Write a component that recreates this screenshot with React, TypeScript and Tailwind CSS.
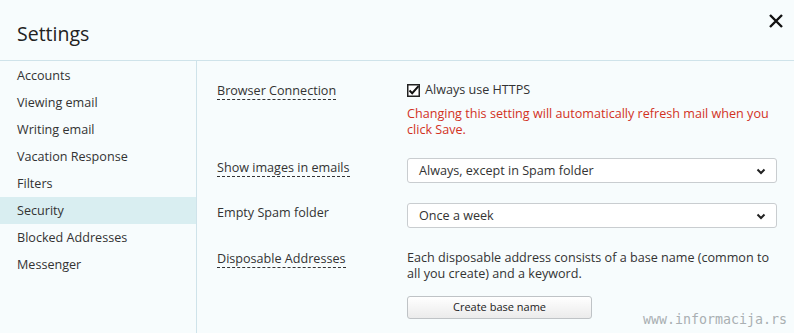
import React from 'react';

const menu = ['Accounts', 'Viewing email', 'Writing email', 'Vacation Response', 'Filters', 'Security', 'Blocked Addresses', 'Messenger'];

const Chevron = () => (
	<svg width="10" height="7" viewBox="0 0 10 7" className="absolute right-[10px] top-[9px]">
		<path d="M1.5 1.5 L5 5 L8.5 1.5" fill="none" stroke="#222" strokeWidth="2" />
	</svg>
);

const Select = ({value}: {value: string}) => (
	<div className="relative w-[370px] h-[25px] border border-[#c9cdd0] rounded-[3px] bg-white pl-[11px] leading-[23px]">
		{value}
		<Chevron />
	</div>
);

const Label = ({text, dashed}: {text: string, dashed?: boolean}) => (
	<div className="w-[190px] shrink-0">
		<span className={dashed ? 'border-b border-dashed border-[#333] leading-[16px] inline-block' : 'leading-[16px] inline-block'}>{text}</span>
	</div>
);

export default function App() {
	return (
		<div className="w-[794px] h-[333px] bg-[#f7fcfd] text-[#333] text-[12.6px] overflow-hidden relative" style={{fontFamily: '"Open Sans", "Noto Sans", sans-serif'}}>
			<div className="h-[61px] border-b border-[#cfe3ea] flex items-start justify-between">
				<div className="pl-[17px] pt-[21px] text-[19.5px] leading-[26px] text-[#222]">Settings</div>
				<svg width="16" height="16" viewBox="0 0 16 16" className="mt-[13px] mr-[10px]">
					<path d="M2 2 L14 14 M14 2 L2 14" stroke="#111" strokeWidth="2.4" />
				</svg>
			</div>
			<div className="flex">
				<div className="w-[197px] border-r border-[#cfe3ea] h-[272px] pt-[1px]">
					{menu.map((m) => (
						<div key={m} className={'h-[27px] leading-[27px] pl-[17px] ' + (m === 'Security' ? 'bg-[#d9eef1]' : '')}>{m}</div>
					))}
				</div>
				<div className="flex-1 pl-[20px] pt-[21px]">
					<div className="flex">
						<Label text="Browser Connection" dashed />
						<div>
							<div className="flex items-center gap-[5px] h-[16px]">
								<svg width="13" height="13" viewBox="0 0 13 13">
									<rect x="0.75" y="0.75" width="11.5" height="11.5" fill="white" stroke="#222" strokeWidth="1.5" />
									<path d="M2.5 6.5 L5.2 9.2 L11.5 2.2" fill="none" stroke="#111" strokeWidth="2" />
								</svg>
								<span className="leading-[16px]">Always use HTTPS</span>
							</div>
							<div className="text-[#d2321f] leading-[16px] mt-[8px] w-[370px]">Changing this setting will automatically refresh mail when you click Save.</div>
						</div>
					</div>
					<div className="flex mt-[20px]">
						<div className="pt-[1px]"><Label text="Show images in emails" dashed /></div>
						<Select value="Always, except in Spam folder" />
					</div>
					<div className="flex mt-[20px]">
						<div className="pt-[1px]"><Label text="Empty Spam folder" /></div>
						<Select value="Once a week" />
					</div>
					<div className="flex mt-[22px]">
						<Label text="Disposable Addresses" dashed />
						<div>
							<div className="leading-[16px] w-[370px]">Each disposable address consists of a base name (common to all you create) and a keyword.</div>
							<button className="mt-[14px] w-[185px] h-[23px] border border-[#bfc3c6] rounded-[3px] bg-gradient-to-b from-white to-[#ebebeb] text-[11px] text-[#222]">Create base name</button>
						</div>
					</div>
				</div>
			</div>
			<div className="absolute right-[7px] bottom-[5px] text-[13.3px] leading-[16px] text-[#a9afb2]" style={{fontFamily: '"DejaVu Sans Mono", monospace'}}>www.informacija.rs</div>
		</div>
	);
}
